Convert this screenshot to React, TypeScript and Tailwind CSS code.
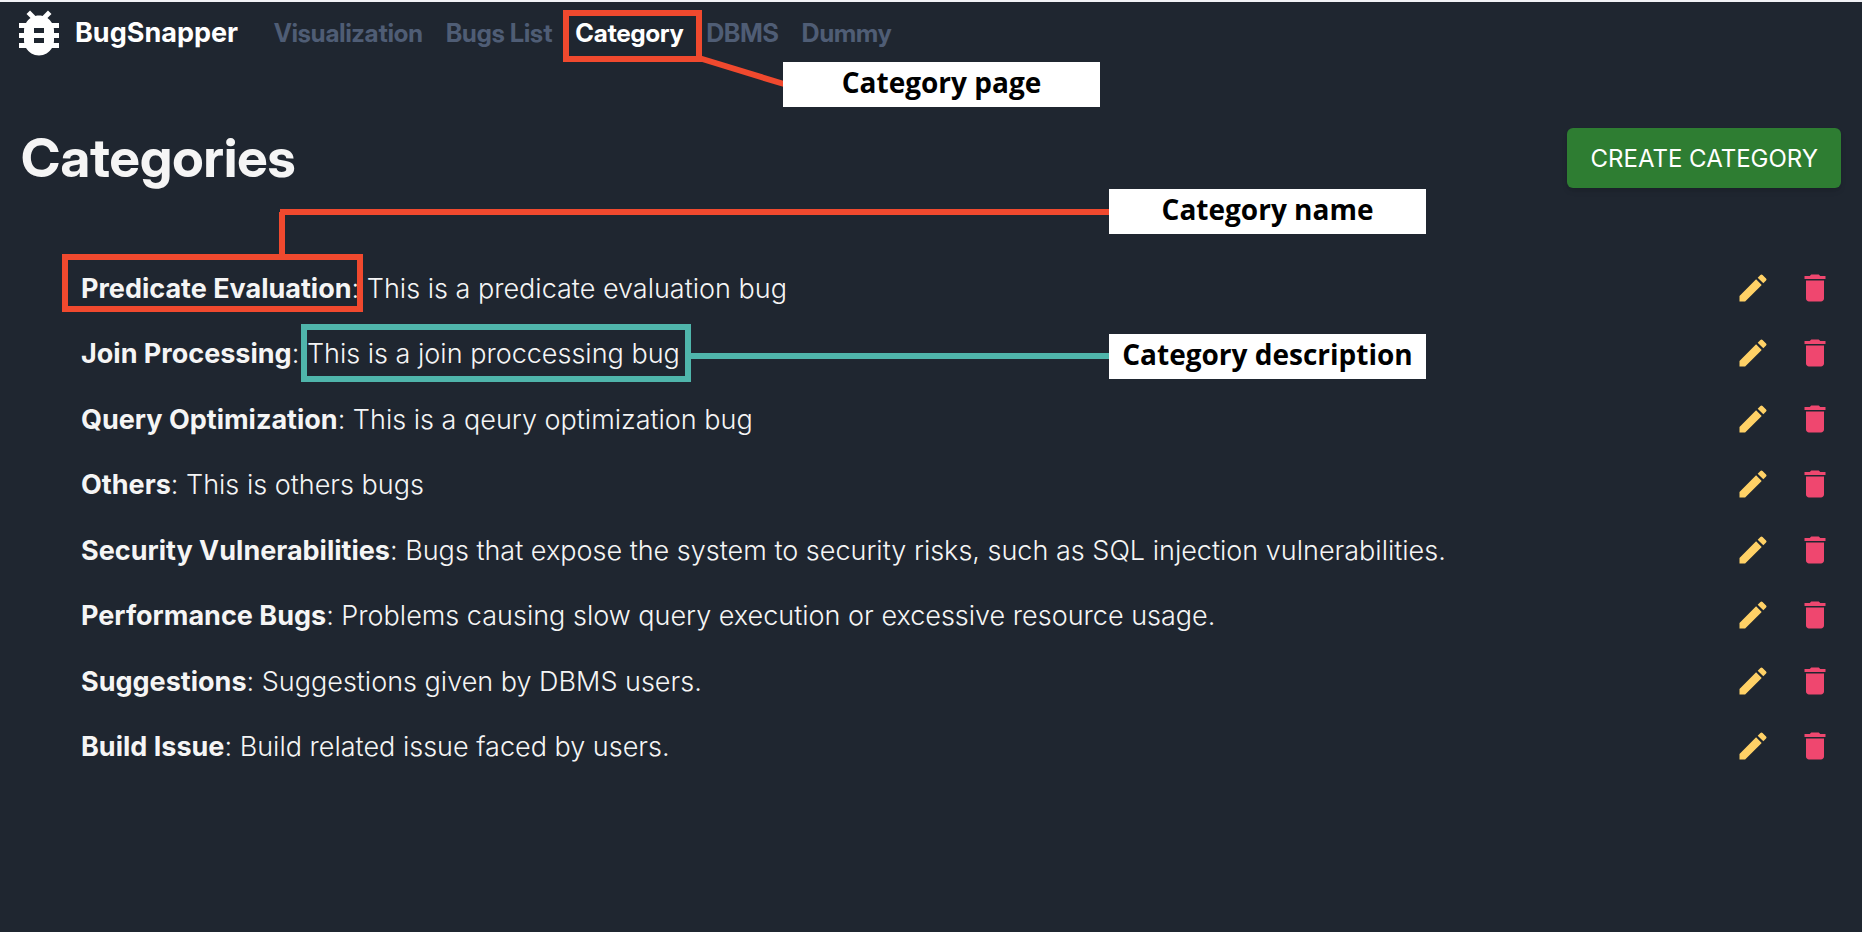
import { MdBugReport, MdDelete, MdEdit } from "react-icons/md";

const navLinks = [
  { label: "Visualization", active: false },
  { label: "Bugs List", active: false },
  { label: "Category", active: true },
  { label: "DBMS", active: false },
  { label: "Dummy", active: false },
];

const categories = [
  { name: "Predicate Evaluation", description: "This is a predicate evaluation bug" },
  { name: "Join Processing", description: "This is a join proccessing bug" },
  { name: "Query Optimization", description: "This is a qeury optimization bug" },
  { name: "Others", description: "This is others bugs" },
  {
    name: "Security Vulnerabilities",
    description:
      "Bugs that expose the system to security risks, such as SQL injection vulnerabilities.",
  },
  {
    name: "Performance Bugs",
    description: "Problems causing slow query execution or excessive resource usage.",
  },
  { name: "Suggestions", description: "Suggestions given by DBMS users." },
  { name: "Build Issue", description: "Build related issue faced by users." },
];

function NavBar() {
  return (
    <header className="flex h-[62px] items-center pl-[9px]">
      <a href="#home" className="flex items-center gap-[6px] text-white">
        <MdBugReport className="size-[60px]" aria-hidden="true" />
        <span className="text-[27px] leading-8 font-bold">BugSnapper</span>
      </a>
      <nav className="ml-9 flex gap-[23px] font-['Inter_Display','Inter',sans-serif] text-[25px] leading-8 font-bold">
        {navLinks.map((link) => (
          <a
            key={link.label}
            href="#page"
            className={link.active ? "text-white" : "text-[#4f5d75]"}
          >
            {link.label}
          </a>
        ))}
      </nav>
    </header>
  );
}

function CategoryRow({ name, description }: { name: string; description: string }) {
  return (
    <li className="flex items-center justify-between">
      <p className="pt-[2px] text-[27px] leading-8 font-light">
        <strong className="font-bold">{name}</strong>: {description}
      </p>
      <div className="flex gap-[26px]">
        <button type="button" aria-label={`Edit ${name}`} className="text-[#ffd166]">
          <MdEdit className="size-9" />
        </button>
        <button type="button" aria-label={`Delete ${name}`} className="text-[#ef476f]">
          <MdDelete className="size-9" />
        </button>
      </div>
    </li>
  );
}

function Callouts() {
  const label =
    "absolute flex h-[45px] w-[317px] items-center justify-center bg-white pb-[6px] font-['Open_Sans',sans-serif] text-[28px] leading-8 font-bold whitespace-nowrap text-black";
  return (
    <div className="pointer-events-none absolute inset-0">
      <svg className="absolute top-0 left-0" width="1120" height="390" fill="none" strokeWidth="6">
        <g stroke="#f0492e">
          <path d="M699 58 784 84" />
          <path d="M282 254V212" />
          <path d="M280 212H1110" />
          <rect x="566" y="13" width="133" height="46" />
          <rect x="65" y="257" width="295" height="52" />
        </g>
        <g stroke="#4fb5ab">
          <rect x="304" y="327" width="384" height="52" />
          <path d="M690 356H1110" />
        </g>
      </svg>
      <div className={`${label} top-[62px] left-[783px]`}>Category page</div>
      <div className={`${label} top-[189px] left-[1109px]`}>Category name</div>
      <div className={`${label} top-[334px] left-[1109px]`}>Category description</div>
    </div>
  );
}

export default function App() {
  return (
    <div className="relative min-h-screen border-t-2 border-[#f1f2f6] bg-[#1f2630] font-['Inter',sans-serif] text-[#f5f5f5] [font-feature-settings:'calt'_0]">
      <NavBar />
      <main>
        <div className="flex items-center justify-between px-[21px] pt-16">
          <h1 className="font-['Inter_Display','Inter',sans-serif] text-[54px] leading-[60px] font-bold">
            Categories
          </h1>
          <button
            type="button"
            className="h-[60px] rounded-md bg-[#2e7d32] px-[23px] pt-[2px] text-2xl text-white shadow-md"
          >
            CREATE CATEGORY
          </button>
        </div>
        <ul className="mt-[67px] grid min-h-[524px] auto-rows-fr pr-[29px] pl-[81px]">
          {categories.map((category) => (
            <CategoryRow key={category.name} {...category} />
          ))}
        </ul>
      </main>
      <div className="absolute inset-x-0 -top-[2px] bottom-0">
        <Callouts />
      </div>
    </div>
  );
}
